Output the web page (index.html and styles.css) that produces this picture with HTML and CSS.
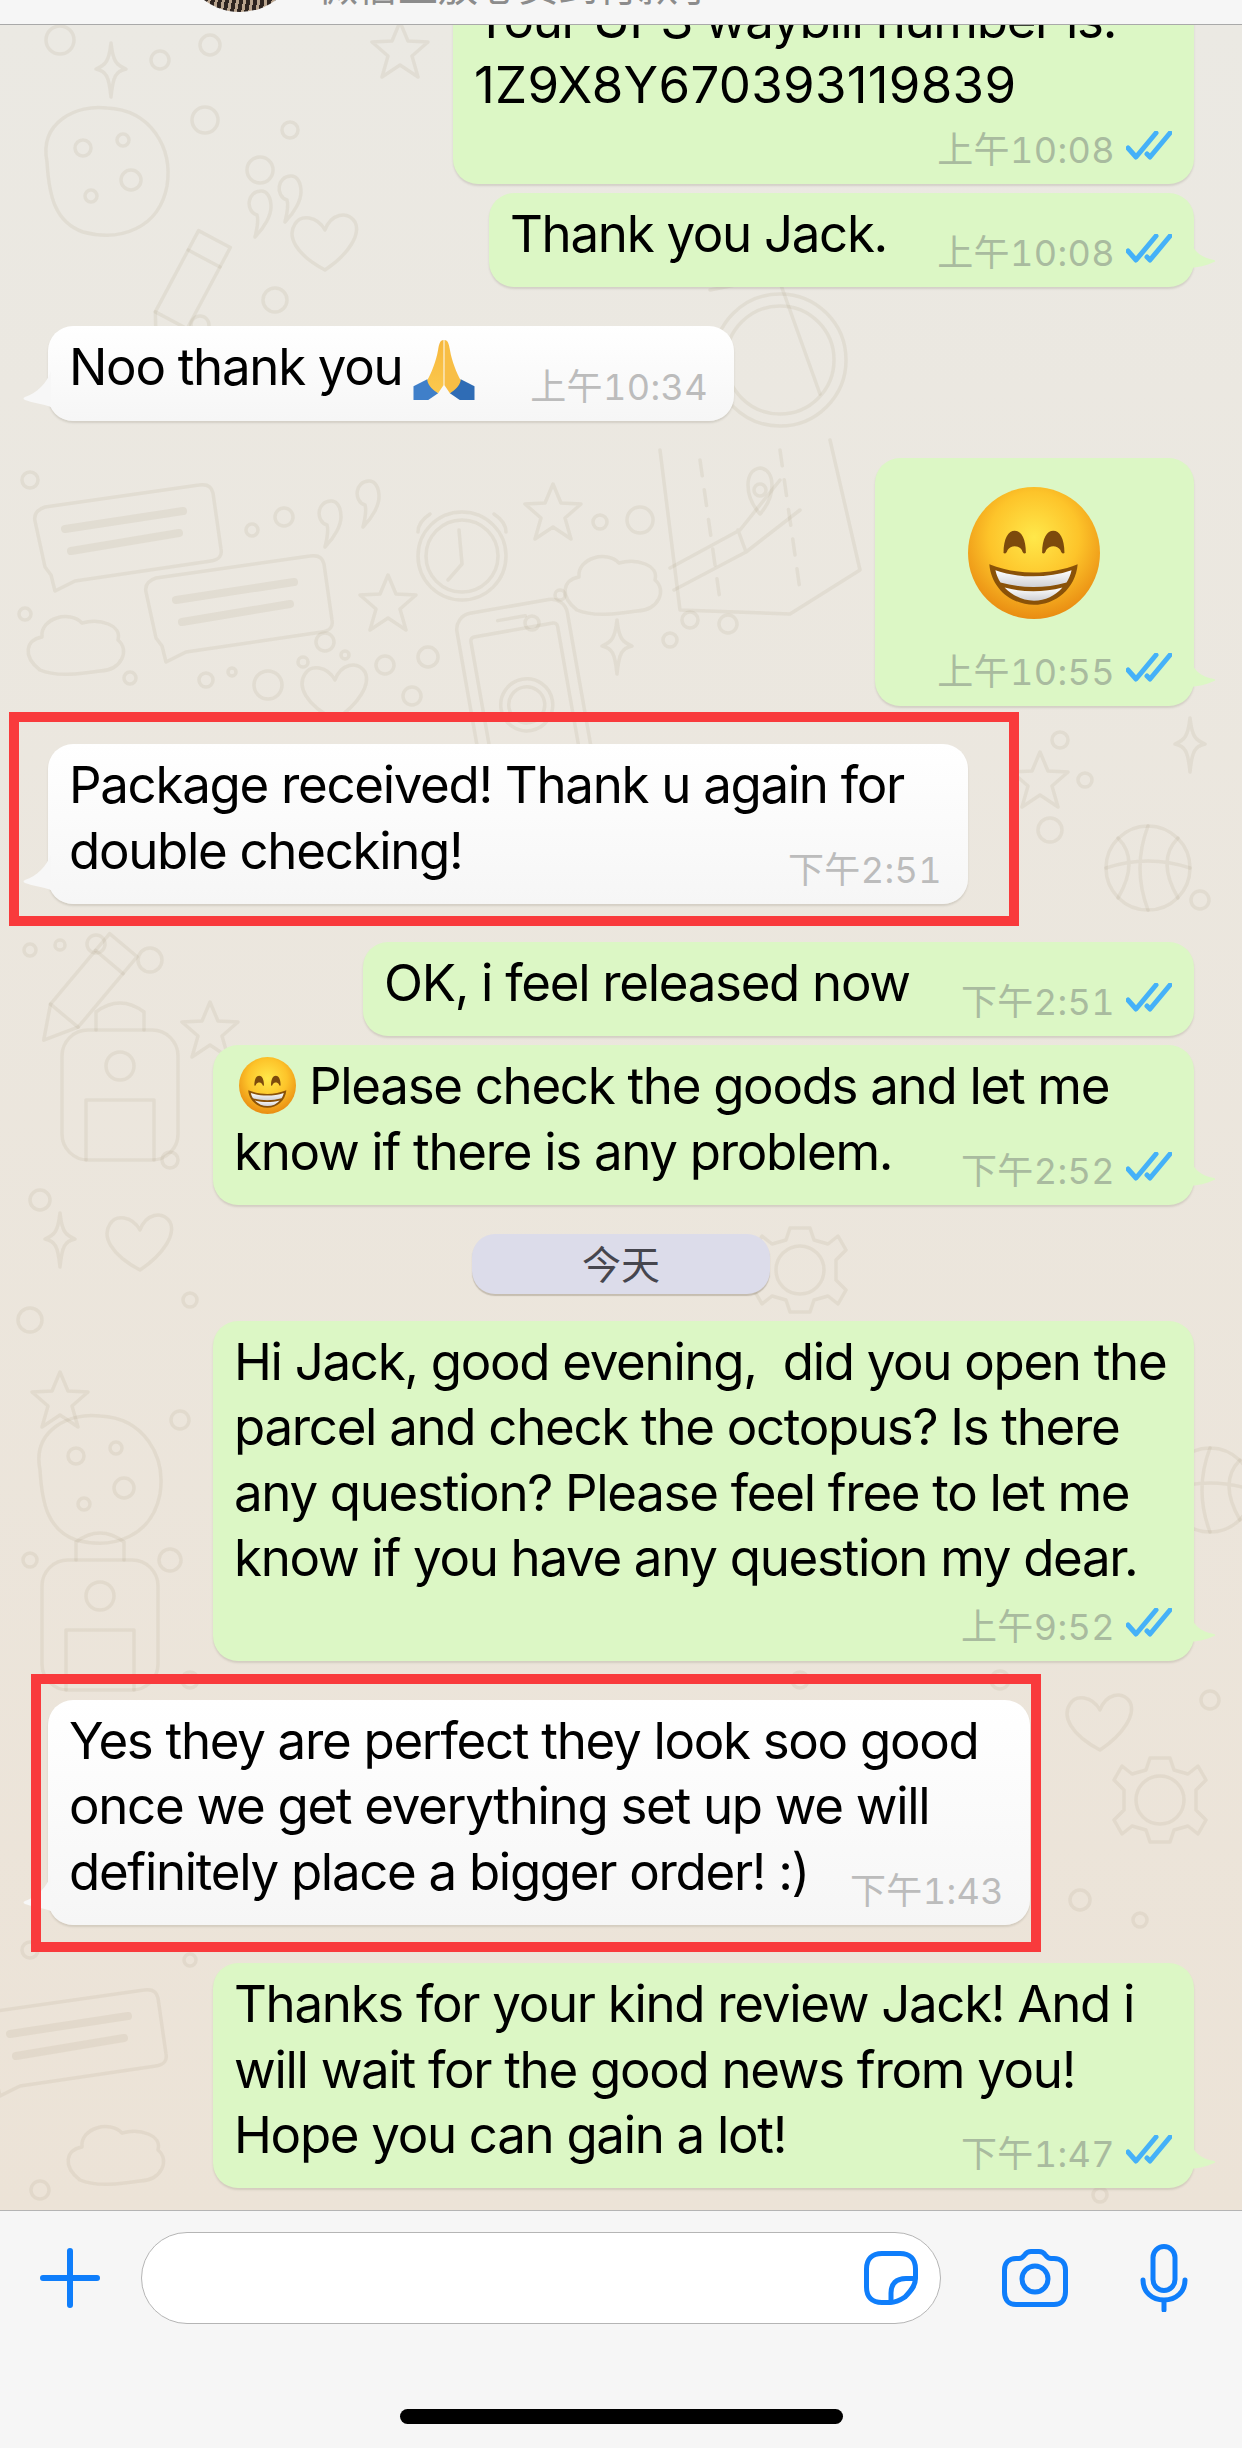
FILE: index.html
```html
<!DOCTYPE html>
<html>
  <head>
    <meta charset="utf-8" />
    <meta name="viewport" content="width=device-width, initial-scale=1.0" />
    <link rel="stylesheet" href="styles.css">
  </head>

  <body>
    <svg class="defs" width="0" height="0">
      <defs>
        <radialGradient id="face" cx="50%" cy="38%" r="62%">
          <stop offset="0" stop-color="#ffe84a" />
          <stop offset="0.55" stop-color="#fdc42a" />
          <stop offset="1" stop-color="#e98c12" />
        </radialGradient>
        <linearGradient id="teeth" x1="0" y1="0" x2="0" y2="1">
          <stop offset="0" stop-color="#ffffff" />
          <stop offset="1" stop-color="#cfd0d4" />
        </linearGradient>
        <linearGradient id="palm" x1="0" y1="0" x2="0" y2="1">
          <stop offset="0" stop-color="#f6b73c" />
          <stop offset="1" stop-color="#fcc94e" />
        </linearGradient>
        <symbol id="grin" viewBox="0 0 130 130">
          <circle cx="65" cy="65" r="65" fill="url(#face)" />
          <path d="M35 65C35 50 40 43 46 43C52 43 57 50 57 65C55 66 54 65 53 62C50 57 42 57 39 62C38 65 37 66 35 65Z" fill="#7c4a0c" />
          <path d="M73 65C73 50 78 43 84 43C90 43 95 50 95 65C93 66 92 65 91 62C88 57 80 57 77 62C76 65 75 66 73 65Z" fill="#7c4a0c" />
          <path d="M21 76C48 87 81 87 108 76C106 100 86 116 65 116C43 116 23 100 21 76Z" fill="#8a5208" />
          <path d="M27 82C50 90 79 90 102 82C101 87 99 91 97 94C76 100 53 100 32 94C30 91 28 87 27 82Z" fill="url(#teeth)" />
          <path d="M36 99C55 104 74 104 93 99C86 107 76 112 65 112C54 112 44 107 36 99Z" fill="url(#teeth)" />
        </symbol>
        <symbol id="pray" viewBox="0 0 62 62">
          <path d="M0 47L14 40L25 54L15 61L0 61Z" fill="#3f7fc9" />
          <path d="M62 47L48 40L37 54L47 61L62 61Z" fill="#2f6cb5" />
          <path d="M30.500 0C27 0 26 4 25 10C23 22 18 34 14 41C15 47 20 51 25 54L30.500 46Z" fill="url(#palm)" />
          <path d="M31.500 0C35 0 36 4 37 10C39 22 44 34 48 41C47 47 42 51 37 54L31.500 46Z" fill="#f8be45" />
        </symbol>
        <symbol id="ticks" viewBox="0 0 46 30">
          <path d="M2 17L10 26L30 2" />
          <path d="M21 23L24 26L44 2" />
        </symbol>
        <symbol id="tail-out" viewBox="0 0 28 34">
          <path d="M0 0C2 11 11 19 24 21C26 22 25 23 24 23C16 27 8 28 0 29Z" />
        </symbol>
        <symbol id="tail-in" viewBox="0 0 28 40">
          <path d="M28 0C24 12 14 22 2 26C0 27 0 28 2 29C10 32 20 33 28 36Z" />
        </symbol>
        <g id="d-star"><path d="M0-28L8-9L28-8L12 6L18 27L0 15L-18 27L-12 6L-28-8L-8-9Z" /></g>
        <g id="d-spark"><path d="M0-27C2-9 5-5 15-1C5 1 2 6 0 27C-2 6-5 1-15-1C-5-5-2-9 0-27Z" /></g>
        <g id="d-cloud"><path d="M-40 30C-58 16-54 0-38-3C-40-22-10-30 2-17C20-22 42-15 38 0C50 10 42 30 20 31C0 34-24 37-40 30Z" /></g>
        <g id="d-heart"><path d="M0 30C-30 14-38-4-30-16C-24-26-8-24 0-10C6-26 22-30 30-18C36-6 24 14 0 30Z" /></g>
        <g id="d-quote"><path d="M-4-24C-18-24-20-4-8 0C-6 6-8 14-10 22C0 12 6 0 6-8C6-18 2-24-4-24Z" /></g>
        <g id="d-msg">
          <path d="M-90-14Q-92-24-80-28L74-50Q86-52 88-42L96 14Q98 24 86 26L-50 46L-70 56L-74 40L-80 32Z" />
          <path d="M-60-6L58-24M-54 16L54-2" stroke-width="8" />
        </g>
        <g id="d-clock">
          <circle r="44" /><circle r="36" />
          <path d="M-3-26L0 8L-14 24" />
          <path d="M-32-42Q-44-34-44-24M32-42Q44-34 44-24" />
        </g>
        <g id="d-phone">
          <rect x="-56" y="-90" width="112" height="190" rx="16" />
          <rect x="-44" y="-66" width="88" height="146" rx="4" />
          <path d="M-14-78H14" />
          <circle cy="10" r="26" /><circle cy="10" r="18" />
        </g>
        <g id="d-pencil">
          <path d="M-18-52L18-52L18 40L0 72L-18 40Z" />
          <path d="M-18-30H18M-18 40H18" />
        </g>
        <g id="d-gear">
          <circle r="24" />
          <path d="M-10-42H10L14-30L28-26L38-34L46-20L36-10V10L46 20L38 34L28 26L14 30L10 42H-10L-14 30L-28 26L-38 34L-46 20L-36 10V-10L-46-20L-38-34L-28-26L-14-30Z" />
        </g>
        <g id="d-ball">
          <circle r="42" />
          <path d="M-42 0Q0-14 42 0M0-42Q-16 0 0 42M-30-30Q-8-8-30 30M30-30Q8-8 30 30" />
        </g>
        <g id="d-bag">
          <rect x="-58" y="-60" width="116" height="130" rx="26" />
          <path d="M-34 70V10H34V70M-24-60V-78Q0-96 24-78V-60" />
          <circle cy="-24" r="14" />
        </g>
        <g id="d-wheel">
          <circle r="66" /><circle r="54" />
          <path d="M-8-100L40 34M-70-70L30-90" />
        </g>
        <g id="d-cookie">
          <path d="M-60-10C-68-50-30-68 0-64C44-62 66-24 60 14C52 56 14 70-24 60C-52 50-58 24-60-10Z" />
          <circle cx="-24" cy="-24" r="8" /><circle cx="16" cy="-32" r="6" /><circle cx="24" cy="8" r="10" /><circle cx="-16" cy="24" r="6" />
        </g>
        <g id="d-map">
          <path d="M-70-90L-50 70L60 74L130 30L100-100" />
          <path d="M-60 28L10-10L50-60M-56 50L16 12L70-30M8-10L16 12" />
          <path d="M-30-80L-10 60M50-90L70 50" stroke-dasharray="16 14" />
          <circle cx="30" cy="-50" r="6" /><path d="M30-26C14-44 14-70 30-72C46-70 46-44 30-26Z" />
        </g>
      </defs>
    </svg>

    <div class="status-top">
      <div class="avatar"></div>
      <div class="contact">微信上放心货到付款手</div>
    </div>

    <div class="chat">
      <svg class="wallpaper" viewBox="0 25 1242 2185" width="1242" height="2185">
        <use href="#d-cookie" x="107" y="172" />
        <use href="#d-spark" x="111" y="70" />
        <use href="#d-pencil" x="190" y="285" transform="rotate(28 190 285)" />
        <use href="#d-heart" x="325" y="240" />
        <use href="#d-star" x="400" y="50" />
        <use href="#d-quote" x="265" y="215" />
        <use href="#d-quote" x="295" y="200" />
        <use href="#d-wheel" x="780" y="360" />
        <use href="#d-msg" x="125" y="535" />
        <use href="#d-msg" x="236" y="606" />
        <use href="#d-quote" x="335" y="525" />
        <use href="#d-quote" x="373" y="505" />
        <use href="#d-clock" x="462" y="556" />
        <use href="#d-star" x="388" y="603" />
        <use href="#d-star" x="553" y="512" />
        <use href="#d-cloud" x="80" y="640" />
        <use href="#d-cloud" x="617" y="580" />
        <use href="#d-phone" x="525" y="695" transform="rotate(-10 525 695)" />
        <use href="#d-spark" x="617" y="647" />
        <use href="#d-map" x="730" y="540" />
        <use href="#d-heart" x="335" y="690" />
        <use href="#d-ball" x="1148" y="868" />
        <use href="#d-spark" x="1190" y="745" />
        <use href="#d-star" x="1040" y="780" />
        <use href="#d-bag" x="120" y="1090" />
        <use href="#d-pencil" x="90" y="985" transform="rotate(40 90 985)" />
        <use href="#d-star" x="210" y="1030" />
        <use href="#d-spark" x="60" y="1240" />
        <use href="#d-heart" x="140" y="1240" />
        <use href="#d-star" x="60" y="1400" />
        <use href="#d-cookie" x="100" y="1480" />
        <use href="#d-bag" x="100" y="1620" />
        <use href="#d-gear" x="1160" y="1800" />
        <use href="#d-heart" x="1100" y="1720" />
        <use href="#d-msg" x="70" y="2040" />
        <use href="#d-cloud" x="120" y="2150" />
        <use href="#d-gear" x="800" y="1270" />
        <use href="#d-ball" x="1210" y="1490" />
        <circle cx="210" cy="45" r="10" /><circle cx="160" cy="60" r="9" /><circle cx="205" cy="120" r="13" />
        <circle cx="260" cy="170" r="13" /><circle cx="290" cy="130" r="8" /><circle cx="60" cy="40" r="14" />
        <circle cx="200" cy="325" r="9" /><circle cx="275" cy="300" r="12" /><circle cx="30" cy="480" r="8" />
        <circle cx="284" cy="517" r="9" /><circle cx="252" cy="530" r="6" /><circle cx="600" cy="522" r="7" />
        <circle cx="640" cy="520" r="13" /><circle cx="25" cy="614" r="6" /><circle cx="325" cy="642" r="9" />
        <circle cx="345" cy="655" r="4" /><circle cx="303" cy="662" r="5" /><circle cx="385" cy="665" r="9" />
        <circle cx="428" cy="657" r="10" /><circle cx="206" cy="680" r="7" /><circle cx="232" cy="672" r="4" />
        <circle cx="268" cy="685" r="14" /><circle cx="130" cy="678" r="6" /><circle cx="412" cy="696" r="9" />
        <circle cx="532" cy="623" r="7" /><circle cx="560" cy="595" r="5" /><circle cx="670" cy="640" r="7" />
        <circle cx="690" cy="620" r="8" /><circle cx="728" cy="624" r="9" /><circle cx="1060" cy="740" r="8" />
        <circle cx="1085" cy="780" r="7" /><circle cx="1050" cy="830" r="12" /><circle cx="1200" cy="900" r="9" />
        <circle cx="30" cy="950" r="6" /><circle cx="60" cy="945" r="5" /><circle cx="96" cy="944" r="9" />
        <circle cx="150" cy="960" r="12" /><circle cx="40" cy="1200" r="10" /><circle cx="170" cy="1160" r="8" />
        <circle cx="190" cy="1300" r="7" /><circle cx="30" cy="1320" r="12" /><circle cx="180" cy="1420" r="9" />
        <circle cx="170" cy="1560" r="11" /><circle cx="30" cy="1560" r="7" /><circle cx="190" cy="1680" r="8" />
        <circle cx="1080" cy="1900" r="10" /><circle cx="1140" cy="1920" r="7" /><circle cx="1210" cy="1700" r="9" />
        <circle cx="30" cy="1950" r="8" /><circle cx="190" cy="1960" r="6" /><circle cx="40" cy="2190" r="9" />
        <circle cx="1000" cy="1680" r="9" /><circle cx="800" cy="1680" r="8" /><circle cx="1100" cy="2195" r="7" />
      </svg>

      <div class="bubble out w-741 tall">
        <div class="text">Your UPS waybill number is:<br /><span class="waybill">1Z9X8Y670393119839</span></div>
        <div class="meta">上午10:08<svg class="tick"><use href="#ticks" /></svg></div>
      </div>

      <div class="bubble out w-705 near">
        <div class="text">Thank you Jack.</div>
        <div class="meta">上午10:08<svg class="tick"><use href="#ticks" /></svg></div>
        <svg class="tail tail-right"><use href="#tail-out" /></svg>
      </div>

      <div class="bubble in w-686">
        <div class="text">Noo thank you<svg class="emoji-pray"><use href="#pray" /></svg></div>
        <div class="meta">上午10:34</div>
        <svg class="tail tail-left"><use href="#tail-in" /></svg>
      </div>

      <div class="bubble out w-319">
        <svg class="emoji-big"><use href="#grin" /></svg>
        <div class="meta">上午10:55<svg class="tick"><use href="#ticks" /></svg></div>
        <svg class="tail tail-right"><use href="#tail-out" /></svg>
      </div>

      <div class="bubble in w-920">
        <div class="text">Package received! Thank u again for<br />double checking!</div>
        <div class="meta">下午2:51</div>
        <svg class="tail tail-left"><use href="#tail-in" /></svg>
        <div class="mark mark-first"></div>
      </div>

      <div class="bubble out w-831">
        <div class="text">OK, i feel released now</div>
        <div class="meta">下午2:51<svg class="tick"><use href="#ticks" /></svg></div>
      </div>

      <div class="bubble out w-981 near">
        <div class="text"><svg class="emoji-small"><use href="#grin" /></svg> Please check the goods and let me<br />know if there is any problem.</div>
        <div class="meta">下午2:52<svg class="tick"><use href="#ticks" /></svg></div>
        <svg class="tail tail-right"><use href="#tail-out" /></svg>
      </div>

      <div class="day">今天</div>

      <div class="bubble out w-981 after-day with-meta-row">
        <div class="text">Hi Jack, good evening,&nbsp; did you open the<br />parcel and check the octopus? Is there<br />any question? Please feel free to let me<br />know if you have any question my dear.</div>
        <div class="meta">上午9:52<svg class="tick"><use href="#ticks" /></svg></div>
        <svg class="tail tail-right"><use href="#tail-out" /></svg>
      </div>

      <div class="bubble in w-982">
        <div class="text">Yes they are perfect they look soo good<br />once we get everything set up we will<br />definitely place a bigger order! :)</div>
        <div class="meta">下午1:43</div>
        <svg class="tail tail-left"><use href="#tail-in" /></svg>
        <div class="mark mark-second"></div>
      </div>

      <div class="bubble out w-981">
        <div class="text">Thanks for your kind review Jack! And i<br />will wait for the good news from you!<br />Hope you can gain a lot!</div>
        <div class="meta">下午1:47<svg class="tick"><use href="#ticks" /></svg></div>
        <svg class="tail tail-right"><use href="#tail-out" /></svg>
      </div>
    </div>

    <div class="composer">
      <div class="composer-row">
        <svg class="icon icon-plus" viewBox="0 0 60 60">
          <path d="M30 3V57M3 30H57" />
        </svg>
        <div class="input">
          <svg class="icon icon-sticker" viewBox="0 0 54 54">
            <path d="M18 2.500H36C46 2.500 51.500 8 51.500 18V27C51.500 34 48 39 41 46C35 50 31 51.500 26 51.500H18C8 51.500 2.500 46 2.500 36V18C2.500 8 8 2.500 18 2.500Z" />
            <path d="M51 27.500H42C32 27.500 27 33 27 42V51" />
          </svg>
        </div>
        <svg class="icon icon-camera" viewBox="0 0 66 58">
          <path d="M14 9.500H17C20 9.500 21 8 23 5.500C24.500 3.500 26 2.500 29 2.500H37C40 2.500 41.500 3.500 43 5.500C45 8 46 9.500 49 9.500H52C59 9.500 63.500 14 63.500 21V43C63.500 51 59 55.500 52 55.500H14C7 55.500 2.500 51 2.500 43V21C2.500 14 7 9.500 14 9.500Z" />
            <circle cx="33" cy="30" r="13" />
        </svg>
        <svg class="icon icon-mic" viewBox="0 0 48 68">
          <rect x="13" y="2.500" width="22" height="44" rx="11" />
          <path d="M3 36C3 48 12 56 24 56C36 56 45 48 45 36M24 56V66" />
        </svg>
      </div>
      <div class="home-bar"></div>
    </div>
  </body>
</html>
```

FILE: styles.css
```css
html,
body {
  margin: 0;
  padding: 0;
}

body {
  width: 1242px;
  height: 2448px;
  display: flex;
  flex-direction: column;
  overflow: hidden;
  background: #f6f6f6;
  font-family: Inter, "Noto Sans CJK SC", sans-serif;
  color: #000;
}

.defs {
  position: absolute;
}

/*the cut off contact bar at the top:*/
.status-top {
  flex: none;
  height: 24px;
  display: flex;
  align-items: flex-end;
  overflow: hidden;
  background: #f6f6f6;
  border-bottom: 1px solid #a9a9a9;
  padding-left: 180px;
}

.avatar {
  flex: none;
  width: 120px;
  height: 120px;
  margin-bottom: 12px;
  border-radius: 50%;
  background: repeating-linear-gradient(100deg, #2e2420 0 4px, #b9a48e 4px 7px);
}

.contact {
  margin: 0 0 13px 18px;
  font-size: 40px;
  line-height: 48px;
  color: #8c8c8c;
  white-space: nowrap;
}

/*messages stick to the bottom, the oldest one runs off the top:*/
.chat {
  position: relative;
  flex: 1;
  min-height: 0;
  display: flex;
  flex-direction: column;
  justify-content: flex-end;
  overflow: hidden;
  padding-bottom: 22px;
  background: linear-gradient(#ebe9e3, #ece3d7);
}

.wallpaper {
  position: absolute;
  top: 0;
  left: 0;
  fill: none;
  stroke: #a08f72;
  stroke-opacity: 0.13;
  stroke-width: 3.5;
  stroke-linejoin: round;
  stroke-linecap: round;
}

.bubble {
  position: relative;
  flex: none;
  display: grid;
  box-sizing: border-box;
  margin-top: 38.5px;
  padding: 8px 22px 20.5px 21px;
  border-radius: 25px;
  box-shadow: 0 2px 2px rgba(90, 80, 60, 0.16);
}

.bubble.near {
  margin-top: 9px;
}

.bubble.after-day {
  margin-top: 27px;
}

.out {
  align-self: flex-end;
  margin-right: 48px;
  background: #dcf7c5;
  fill: #dcf7c5;
}

.in {
  align-self: flex-start;
  margin-left: 48px;
  padding-right: 26px;
  background: linear-gradient(#ffffff, #f6f6f6);
  fill: #f7f7f7;
}

.w-319 { width: 319px; }
.w-686 { width: 686px; }
.w-705 { width: 705px; }
.w-741 { width: 741px; }
.w-831 { width: 831px; }
.w-920 { width: 920px; }
.w-981 { width: 981px; }
.w-982 { width: 982px; }

.bubble.w-319 {
  margin-top: 37px;
}

.text,
.meta,
.emoji-big {
  grid-area: 1 / 1;
}

.text {
  font-size: 51px;
  line-height: 65.5px;
  letter-spacing: -1.3px;
  white-space: nowrap;
}

.waybill {
  letter-spacing: 0.3px;
}

.tall .text {
  padding-bottom: 46px;
}

.with-meta-row .text {
  padding-bottom: 50px;
}

.meta {
  justify-self: end;
  align-self: end;
  display: flex;
  align-items: flex-end;
  margin-bottom: -5.5px;
  font-size: 36px;
  line-height: 38px;
  letter-spacing: 0.4px;
  font-variant-numeric: tabular-nums;
  white-space: nowrap;
}

.out .meta {
  color: #a9bb9f;
}

.in .meta {
  color: #bcbcbc;
}

.tick {
  width: 46px;
  height: 30px;
  margin: 0 0 8px 11px;
  fill: none;
  stroke: #45b1f8;
  stroke-width: 5;
  stroke-linecap: round;
  stroke-linejoin: round;
}

.emoji-big {
  justify-self: center;
  width: 132px;
  height: 132px;
  margin: 21px 0 66px;
}

.emoji-small {
  width: 57px;
  height: 57px;
  margin-left: 5px;
  vertical-align: -10px;
}

.emoji-pray {
  width: 62px;
  height: 61px;
  margin-left: 11px;
  vertical-align: -16px;
}

/*little corner on the side of the bubble:*/
.tail {
  position: absolute;
}

.tail-right {
  right: -24px;
  bottom: 14px;
  width: 28px;
  height: 34px;
}

.tail-left {
  left: -25px;
  bottom: 10px;
  width: 28px;
  height: 40px;
}

/*red frames put over the screenshot by hand:*/
.mark {
  position: absolute;
  border: 10px solid #f93a3c;
}

.mark-first {
  top: -32px;
  right: -51px;
  bottom: -22px;
  left: -39px;
}

.mark-second {
  top: -26px;
  right: -11px;
  bottom: -27px;
  left: -17px;
}

.day {
  position: relative;
  flex: none;
  align-self: center;
  box-sizing: border-box;
  width: 298px;
  height: 60px;
  margin-top: 29px;
  border-radius: 23px;
  background: #dcdcea;
  box-shadow: 0 2px 1px rgba(110, 95, 75, 0.3);
  font-family: "Noto Sans CJK SC", sans-serif;
  font-size: 39px;
  line-height: 56px;
  text-align: center;
  color: #46464e;
}

.composer {
  flex: none;
  height: 237px;
  display: flex;
  flex-direction: column;
  align-items: center;
  background: #f6f6f6;
  border-top: 1px solid #b4b4b4;
}

.composer-row {
  align-self: stretch;
  display: flex;
  align-items: center;
  height: 92px;
  margin-top: 21px;
  padding-left: 40px;
}

.input {
  box-sizing: border-box;
  width: 800px;
  height: 92px;
  margin: 0 61px 0 41px;
  display: flex;
  align-items: center;
  justify-content: flex-end;
  padding-right: 22px;
  background: #fff;
  border: 1px solid #b5b5b5;
  border-radius: 46px;
}

.icon {
  flex: none;
  fill: none;
  stroke: #0f7efb;
  stroke-width: 5;
  stroke-linecap: round;
  stroke-linejoin: round;
}

.icon-plus {
  width: 60px;
  height: 60px;
  stroke-width: 6;
}

.icon-sticker {
  width: 54px;
  height: 54px;
}

.icon-camera {
  width: 66px;
  height: 58px;
}

.icon-mic {
  width: 48px;
  height: 68px;
  margin-left: 72px;
}

.home-bar {
  width: 443px;
  height: 15px;
  margin-top: 85px;
  border-radius: 8px;
  background: #000;
}
```
